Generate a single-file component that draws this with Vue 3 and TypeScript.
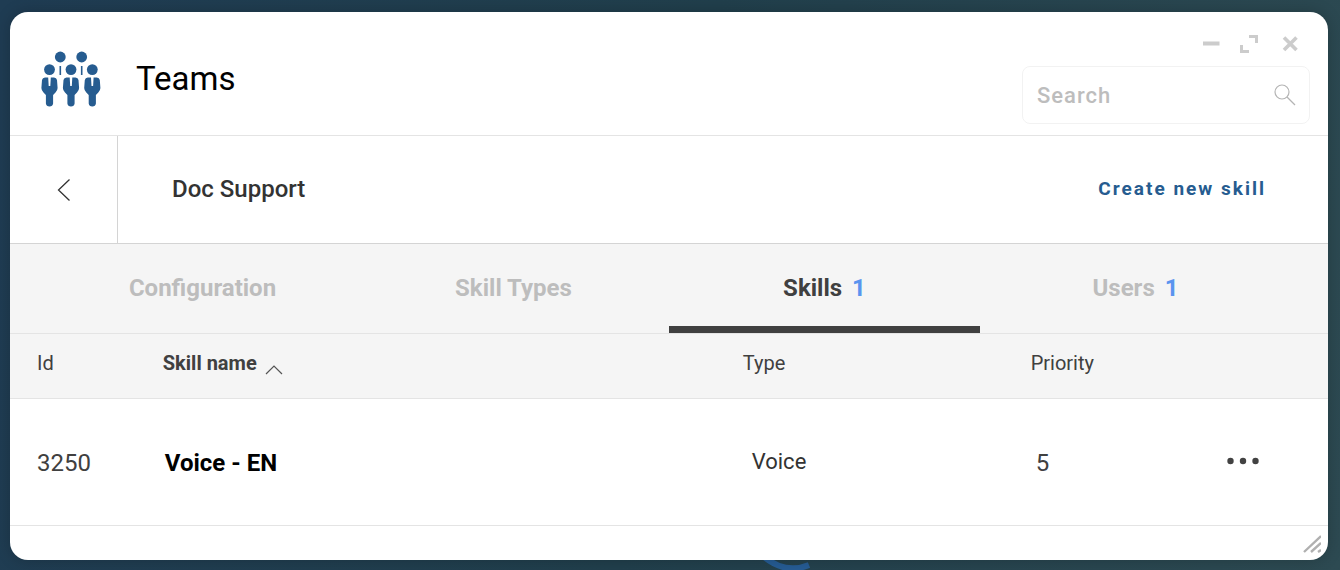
<script setup lang="ts">
import { ref } from 'vue'

interface Tab {
  label: string
  count?: number
}

interface Skill {
  id: number
  name: string
  type: string
  priority: number
}

const tabs: Tab[] = [
  { label: 'Configuration' },
  { label: 'Skill Types' },
  { label: 'Skills', count: 1 },
  { label: 'Users', count: 1 },
]
const activeTab = ref('Skills')
const search = ref('')
const skills = ref<Skill[]>([{ id: 3250, name: 'Voice - EN', type: 'Voice', priority: 5 }])
</script>

<template>
  <div class="desktop">
    <svg class="ring" viewBox="0 0 100 100" aria-hidden="true">
      <path d="M20 83Q42 100.500 65 91" fill="none" stroke="#265c94" stroke-width="6" />
    </svg>
    <main class="window">
      <header class="header">
        <svg class="logo" viewBox="0 0 60 56" aria-hidden="true">
          <g fill="#265c90">
            <circle cx="19.3" cy="6" r="5.400" />
            <circle cx="40.7" cy="6" r="5.400" />
            <rect x="18.5" y="15" width="1.6" height="9" />
            <rect x="39.9" y="15" width="1.6" height="9" />
            <g v-for="x in [8.5, 30, 51.3]" :key="x" :transform="`translate(${x} 0)`">
              <circle cx="0" cy="18.6" r="5.400" />
              <path
                d="M-4.500 26.500H-1.300L-.8 35H.8L1.300 26.500H4.500Q7 26.500 7.500 29L8.100 37Q8.100 39.500 6 41.500L3.600 44V52.500Q3.200 55.400 0 55.400T-3.600 52.500V44L-6 41.500Q-8.100 39.500-8.100 37L-7.500 29Q-7 26.500-4.500 26.500Z"
              />
            </g>
          </g>
        </svg>
        <h1 class="title">Teams</h1>
        <div class="tools">
          <div class="controls">
            <button type="button" aria-label="Minimize">
              <svg viewBox="0 0 18 20"><path d="M1 9.500H17.500" stroke="#ccc" stroke-width="4" /></svg>
            </button>
            <button type="button" aria-label="Maximize">
              <svg viewBox="0 0 18 20">
                <path d="M9 2.500H16.500V9M1.500 11V17.500H9" fill="none" stroke="#ccc" stroke-width="3" />
              </svg>
            </button>
            <button class="close" type="button" aria-label="Close">
              <svg viewBox="0 0 18 20">
                <path d="M3 3.500L15.500 16M15.500 3.500L3 16" stroke="#ccc" stroke-width="3.600" />
              </svg>
            </button>
          </div>
          <label class="search">
            <input v-model="search" type="text" placeholder="Search" aria-label="Search" />
            <svg viewBox="0 0 22 22" aria-hidden="true">
              <g fill="none" stroke="#b4b4b4" stroke-width="1.200">
                <circle cx="8" cy="8" r="7" />
                <path d="M13 13L21 21" />
              </g>
            </svg>
          </label>
        </div>
      </header>

      <section class="subheader">
        <button class="back" type="button" aria-label="Back">
          <svg viewBox="0 0 14 24">
            <path d="M12.500 1.500L1.500 12L12.500 22.500" fill="none" stroke="#333" stroke-width="1.300" />
          </svg>
        </button>
        <h2 class="team">Doc Support</h2>
        <button class="create" type="button">Create new skill</button>
      </section>

      <nav class="tabs" role="tablist">
        <button
          v-for="tab in tabs"
          :key="tab.label"
          type="button"
          role="tab"
          class="tab"
          :class="{ active: tab.label === activeTab }"
          :aria-selected="tab.label === activeTab"
          @click="activeTab = tab.label"
        >
          <span>{{ tab.label }}</span>
          <span v-if="tab.count" class="count">{{ tab.count }}</span>
        </button>
      </nav>

      <table class="skills">
        <colgroup>
          <col class="col-id" />
          <col class="col-name" />
          <col class="col-type" />
          <col class="col-priority" />
          <col />
        </colgroup>
        <thead>
          <tr>
            <th scope="col">Id</th>
            <th scope="col" aria-sort="ascending">
              <button type="button" class="sort">
                Skill name
                <svg viewBox="0 0 18 10" aria-hidden="true">
                  <path d="M1 9L9 1L17 9" fill="none" stroke="#555" stroke-width="1.200" />
                </svg>
              </button>
            </th>
            <th scope="col">Type</th>
            <th scope="col" class="priority-head">Priority</th>
            <th aria-label="Actions"></th>
          </tr>
        </thead>
        <tbody>
          <tr v-for="skill in skills" :key="skill.id">
            <td>{{ skill.id }}</td>
            <td class="name">{{ skill.name }}</td>
            <td class="type">{{ skill.type }}</td>
            <td class="priority">{{ skill.priority }}</td>
            <td class="actions">
              <button type="button" class="more" aria-label="More actions">
                <svg viewBox="0 0 32 8" fill="#424242">
                  <circle cx="3.500" cy="4" r="3.200" />
                  <circle cx="16" cy="4" r="3.200" />
                  <circle cx="28.500" cy="4" r="3.200" />
                </svg>
              </button>
            </td>
          </tr>
        </tbody>
      </table>

      <footer class="footer">
        <svg viewBox="0 0 18 18" aria-hidden="true">
          <path d="M1 17L18 1M8 17L18 8M15 17L18 15" stroke="#b0b0b0" stroke-width="2.400" />
        </svg>
      </footer>
    </main>
  </div>
</template>

<style>
html,
body,
#app {
  height: 100%;
}

body {
  margin: 0;
}
</style>

<style scoped>
* {
  box-sizing: border-box;
}

.desktop {
  position: relative;
  min-height: 100%;
  padding: 12px 12px 10px 10px;
  overflow: hidden;
  display: flex;
  background: linear-gradient(100deg, #1f3c53 0%, #213f4c 50%, #2d4a52 100%);
  font-family: Roboto, 'Liberation Sans', sans-serif;
  color: #404040;
}

.ring {
  position: absolute;
  left: 744px;
  bottom: -4px;
  width: 100px;
  height: 100px;
}

.window {
  position: relative;
  flex: 1;
  display: flex;
  flex-direction: column;
  min-width: 0;
  overflow: hidden;
  background: #fff;
  border-radius: 18px;
  box-shadow: 0 0 16px rgba(0, 0, 0, 0.2);
}

button {
  padding: 0;
  border: 0;
  background: none;
  font: inherit;
  color: inherit;
  cursor: pointer;
}

svg {
  display: block;
}

.header {
  display: flex;
  align-items: center;
  height: 124px;
  padding: 0 18px 0 31px;
  border-bottom: 1px solid #e4e4e4;
}

.logo {
  width: 60px;
  height: 56px;
  margin-top: 10px;
}

.title {
  margin: 10px 0 0 35px;
  font-size: 33px;
  line-height: 40px;
  font-weight: 400;
  color: #000;
}

.tools {
  width: 288px;
  margin-left: auto;
  padding-top: 10px;
}

.controls {
  display: flex;
  justify-content: flex-end;
  gap: 20px;
  margin-bottom: 12px;
  padding-right: 11px;
}

.controls svg {
  width: 18px;
  height: 20px;
}

.close {
  margin-left: 3px;
}

.search {
  display: flex;
  align-items: center;
  height: 58px;
  padding: 0 13px 0 14px;
  border: 1px solid #f2f2f2;
  border-radius: 8px;
}

.search input {
  flex: 1;
  min-width: 0;
  padding: 2px 0 0;
  border: 0;
  outline: 0;
  background: none;
  font: 500 22px/28px Roboto, sans-serif;
  letter-spacing: 1px;
  color: #404040;
}

.search input::placeholder {
  color: #bdbdbd;
  opacity: 1;
}

.search svg {
  width: 22px;
  height: 22px;
}

.subheader {
  display: flex;
  align-items: center;
  height: 108px;
  padding-right: 62px;
  border-bottom: 1px solid #d4d4d4;
}

.back {
  display: flex;
  align-items: center;
  justify-content: center;
  align-self: stretch;
  width: 108px;
  border-right: 1px solid #d4d4d4;
}

.back svg {
  width: 14px;
  height: 24px;
}

.team {
  margin: 0 0 2px 54px;
  font-size: 24px;
  line-height: 28px;
  font-weight: 500;
  color: #333;
}

.create {
  margin: 0 0 2px auto;
  font-size: 19px;
  line-height: 28px;
  font-weight: 700;
  letter-spacing: 2px;
  color: #265c90;
}

.tabs {
  display: flex;
  height: 90px;
  padding: 0 37px;
  background: #f5f5f5;
  border-bottom: 1px solid #e4e4e4;
}

.tab {
  flex: 1;
  display: flex;
  align-items: center;
  justify-content: center;
  gap: 10px;
  padding-bottom: 2px;
  border-top: 7px solid transparent;
  border-bottom: 7px solid transparent;
  font-size: 24px;
  line-height: 28px;
  font-weight: 700;
  color: #bdbdbd;
}

.tab.active {
  color: #404040;
  border-bottom-color: #404040;
}

.count {
  color: #5a94ef;
}

.skills {
  width: 100%;
  table-layout: fixed;
  border-collapse: separate;
  border-spacing: 0;
}

.col-id {
  width: 10%;
}

.col-name {
  width: 44%;
}

.col-type {
  width: 22%;
}

.col-priority {
  width: 14%;
}

th {
  height: 65px;
  padding: 0 0 6px 21px;
  background: #f5f5f5;
  border-bottom: 1px solid #e4e4e4;
  font-size: 20px;
  line-height: 24px;
  font-weight: 400;
  text-align: left;
}

td {
  height: 127px;
  padding: 2px 0 0 27px;
  border-bottom: 1px solid #e4e4e4;
  font-size: 24px;
  line-height: 28px;
}

th:first-child {
  padding-left: 27px;
}

.priority-head {
  padding-left: 19px;
}

.sort {
  display: flex;
  gap: 8px;
  align-items: flex-end;
  font-weight: 700;
}

.sort svg {
  width: 18px;
  height: 10px;
}

.name {
  padding-left: 23px;
  font-weight: 700;
  color: #000;
}

.type {
  padding: 0 0 0 30px;
  font-size: 22px;
  color: #333;
}

.priority {
  padding-left: 24px;
}

.actions {
  padding: 0 0 10px 31px;
}

.more svg {
  width: 32px;
  height: 8px;
}

.footer {
  display: flex;
  flex: 1;
  min-height: 34px;
  align-items: flex-end;
  justify-content: flex-end;
  padding: 0 7px 7px 0;
}

.footer svg {
  width: 18px;
  height: 18px;
}
</style>
